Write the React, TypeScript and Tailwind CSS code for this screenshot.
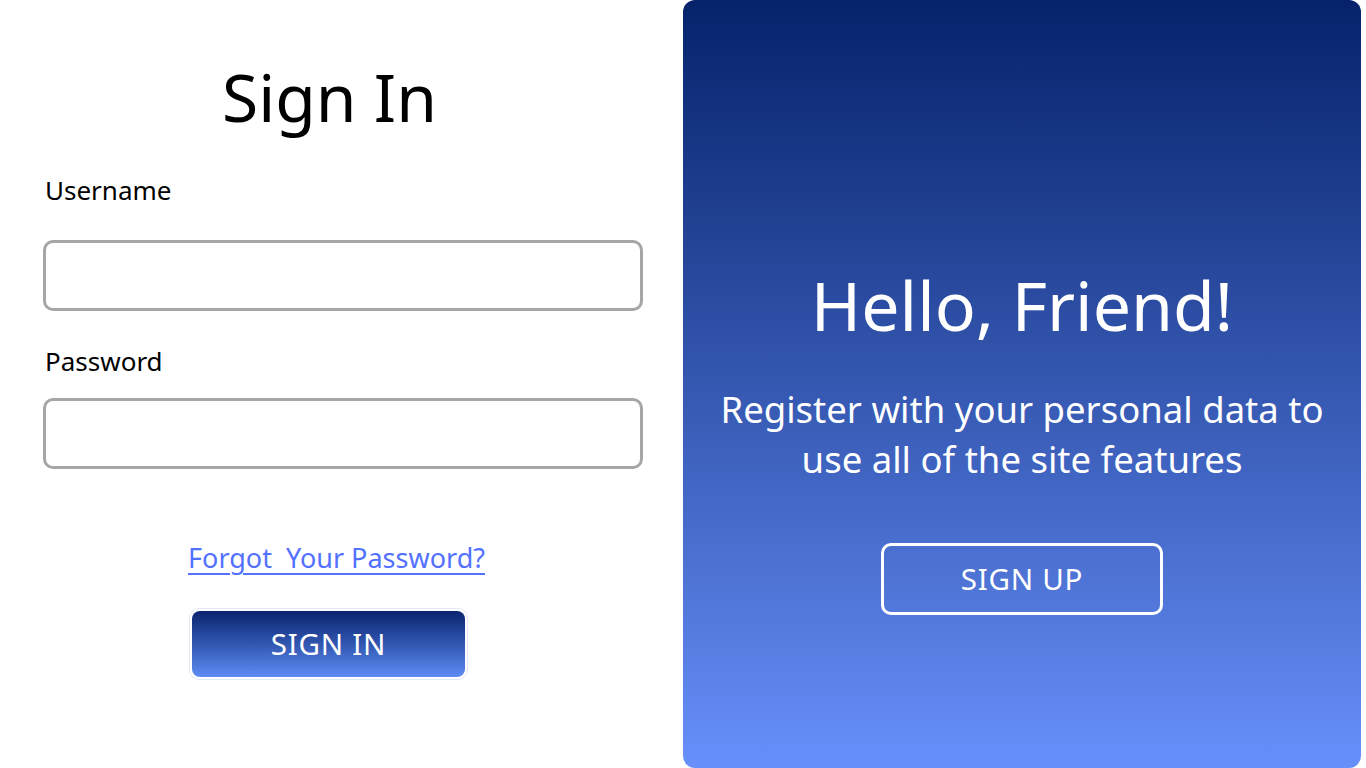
const App = () => {
  return (
    <div
      className="flex w-[1366px] h-[768px] bg-white overflow-hidden"
      style={{ fontFamily: '"Noto Sans", "Open Sans", sans-serif' }}
    >
      <section className="flex flex-col w-[683px] px-[43px]">
        <h1 className="mt-[54px] text-center text-[66px] leading-[84px] text-black pr-[24px]">
          Sign In
        </h1>
        <label className="mt-[34px] ml-[2px] text-[26px] leading-[36px] text-black">
          Username
        </label>
        <input
          type="text"
          className="mt-[32px] w-[600px] h-[71px] rounded-[10px] border-[3px] border-[#a6a6a6] outline-none px-4 text-xl"
        />
        <label className="mt-[32px] ml-[2px] text-[26px] leading-[36px] text-black">
          Password
        </label>
        <input
          type="password"
          className="mt-[19px] w-[600px] h-[71px] rounded-[10px] border-[3px] border-[#a6a6a6] outline-none px-4 text-xl"
        />
        <div className="flex flex-col items-center pr-[10px]">
          <a
            href="#"
            className="mt-[71px] whitespace-pre text-[27px] leading-[36px] text-[#5271ff] underline underline-offset-[5px] decoration-[2px]"
          >
            Forgot  Your Password?
          </a>
          <button className="mt-[32px] mr-[16px] w-[279px] h-[72px] rounded-[10px] border border-[#e3e8f5] bg-white p-[2px]">
            <span className="flex items-center justify-center w-full h-full rounded-[8px] bg-gradient-to-b from-[#0a2470] to-[#5e8cf5] text-white text-[29.5px] tracking-wide">
              SIGN IN
            </span>
          </button>
        </div>
      </section>
      <section className="flex flex-col items-center w-[678px] h-[768px] rounded-[12px] bg-gradient-to-b from-[#06226b] to-[#6890fb] text-white">
        <h2 className="mt-[263px] text-[68px] leading-[84px]">Hello, Friend!</h2>
        <p className="mt-[37px] text-center text-[36.5px] leading-[50px]">
          Register with your personal data to
          <br />
          use all of the site features
        </p>
        <button className="mt-[59px] w-[282px] h-[72px] rounded-[10px] border-[3px] border-white text-[29.5px] tracking-wide text-white">
          SIGN UP
        </button>
      </section>
    </div>
  );
};

export default App;
